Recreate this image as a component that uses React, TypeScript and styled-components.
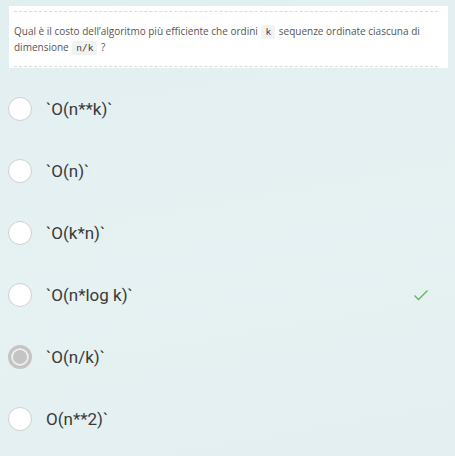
import React from "react";
import styled, { createGlobalStyle } from "styled-components";

const Global = createGlobalStyle`
  html, body { margin: 0; padding: 0; }
  body {
    background: linear-gradient(170deg, #e2eff1 0%, #e6f1f2 60%, #e3eff1 100%);
    width: 455px;
    height: 456px;
    overflow: hidden;
  }
`;

const Page = styled.div`
  width: 455px;
  height: 456px;
  box-sizing: border-box;
  padding: 6px 7px 0 8px;
  display: flex;
  flex-direction: column;
`;

const Card = styled.div`
  background: #ffffff;
  margin-left: 1px;
  padding: 5px 10px 1px 5px;
`;

const Question = styled.div`
  border-top: 1px dashed #d8dcdc;
  border-bottom: 1px dashed #d8dcdc;
  padding: 11px 0 11px 0;
  font-family: "Open Sans", sans-serif;
  font-size: 10px;
  line-height: 16px;
  color: #555;
`;

const Code = styled.code`
  display: inline-block;
  font-family: "DejaVu Sans Mono", monospace;
  font-size: 9.5px;
  line-height: 14px;
  background: #f1f3f3;
  padding: 0 4px;
  margin: 0 1px;
  border-radius: 2px;
  color: #444;
`;

const Options = styled.div`
  margin-top: 10px;
  display: flex;
  flex-direction: column;
`;

const Row = styled.div`
  height: 62px;
  display: flex;
  align-items: center;
  padding-right: 19px;
`;

const Radio = styled.span<{ $checked?: boolean }>`
  box-sizing: border-box;
  width: 24px;
  height: 24px;
  border-radius: 50%;
  flex: none;
  background: ${(p) => (p.$checked ? "#c4c4c4" : "#ffffff")};
  border: ${(p) => (p.$checked ? "3px solid #c4c4c4" : "1.5px solid #cfcfcf")};
  box-shadow: ${(p) => (p.$checked ? "inset 0 0 0 2px #eeeeee" : "none")};
`;

const Label = styled.span`
  margin-left: 14px;
  font-family: Roboto, sans-serif;
  font-size: 17px;
  color: #3a3a3a;
  flex: 1;
`;

const Check = styled.svg`
  width: 16px;
  height: 14px;
  flex: none;
`;

const options = [
  { text: "`O(n**k)`" },
  { text: "`O(n)`" },
  { text: "`O(k*n)`" },
  { text: "`O(n*log k)`", correct: true },
  { text: "`O(n/k)`", checked: true },
  { text: "O(n**2)`" },
];

export default function App() {
  return (
    <>
      <Global />
      <Page>
        <Card>
          <Question>
            Qual è il costo dell’algoritmo più efficiente che ordini <Code>k</Code> sequenze
            ordinate ciascuna di
            <br />
            dimensione <Code>n/k</Code> ?
          </Question>
        </Card>
        <Options>
          {options.map((o, i) => (
            <Row key={i}>
              <Radio $checked={o.checked} />
              <Label>{o.text}</Label>
              {o.correct && (
                <Check viewBox="0 0 16 14">
                  <path d="M1.5 7.5 L5.5 11.5 L14.5 2.5" fill="none" stroke="#5cb85c" strokeWidth="1.3" />
                </Check>
              )}
            </Row>
          ))}
        </Options>
      </Page>
    </>
  );
}
